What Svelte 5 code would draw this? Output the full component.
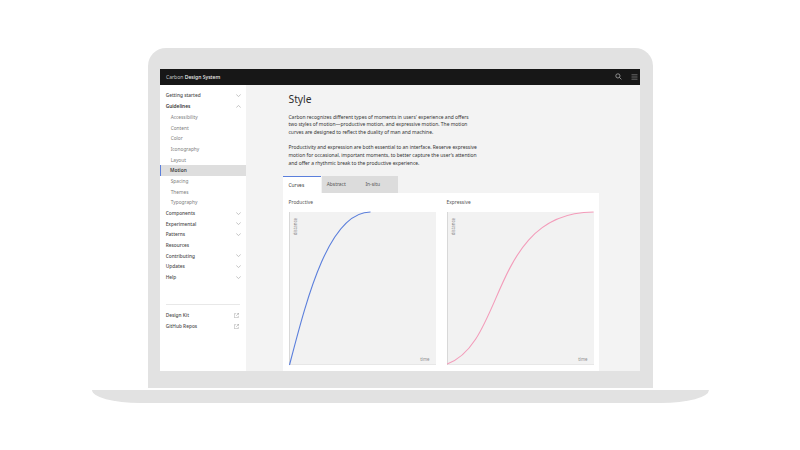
<script>
    const nav = [
        { label: "Getting started", caret: "down" },
        { label: "Guidelines", caret: "up", open: true },
        { label: "Accessibility", sub: true },
        { label: "Content", sub: true },
        { label: "Color", sub: true },
        { label: "Iconography", sub: true },
        { label: "Layout", sub: true },
        { label: "Motion", sub: true, active: true },
        { label: "Spacing", sub: true },
        { label: "Themes", sub: true },
        { label: "Typography", sub: true },
        { label: "Components", caret: "down" },
        { label: "Experimental", caret: "down" },
        { label: "Patterns", caret: "down" },
        { label: "Resources" },
        { label: "Contributing", caret: "down" },
        { label: "Updates", caret: "down" },
        { label: "Help", caret: "down" }
    ];
    const links = ["Design Kit", "GitHub Repos"];
    const tabs = ["Curves", "Abstract", "In-situ"];
    const charts = [
        { title: "Productive", color: "#5b7fdc", d: "M0.5 153C17.5 88 39.5 0 81.5 0" },
        { title: "Expressive", color: "#f39cba", d: "M0.2 152C58.6 131 44.2 0 146.6 0" }
    ];
</script>

<div class="page">
    <div class="laptop">
        <div class="screen">
            <header>
                <span class="brand">Carbon <b>Design System</b></span>
                <span class="actions">
                    <svg width="7" height="7" viewBox="0 0 7 7" fill="none" stroke="#a8a8a8" stroke-width="0.8">
                        <circle cx="2.9" cy="2.9" r="2.1" />
                        <path d="M4.4 4.4L6.4 6.4" />
                    </svg>
                    <svg width="7" height="6" viewBox="0 0 7 6" fill="none" stroke="#a0a0a0" stroke-width="0.6">
                        <path d="M0.5 0.8H6.5M0.5 3H6.5M0.5 5.2H6.5" />
                    </svg>
                </span>
            </header>
            <div class="body">
                <aside>
                    <ul>
                        {#each nav as item}
                            <li class:sub={item.sub} class:active={item.active} class:open={item.open}>
                                <span>{item.label}</span>
                                {#if item.caret}
                                    <svg class="caret" width="5" height="3" viewBox="0 0 5 3" fill="none" stroke="#8d8d8d" stroke-width="0.5">
                                        <path d={item.caret == "down" ? "M0.3 0.5L2.5 2.5L4.7 0.5" : "M0.3 2.5L2.5 0.5L4.7 2.5"} />
                                    </svg>
                                {/if}
                            </li>
                        {/each}
                    </ul>
                    <ul class="links">
                        {#each links as link}
                            <li>
                                <span>{link}</span>
                                <svg width="5" height="5" viewBox="0 0 5 5" fill="none" stroke="#8d8d8d" stroke-width="0.45">
                                    <path d="M2 0.7H0.3V4.7H4.3V3M2.8 0.3H4.7V2.2M4.7 0.3L2.2 2.8" />
                                </svg>
                            </li>
                        {/each}
                    </ul>
                </aside>
                <main>
                    <h1>Style</h1>
                    <p>Carbon recognizes different types of moments in users' experience and offers<br />two styles of motion—productive motion, and expressive motion. The motion<br />curves are designed to reflect the duality of man and machine.</p>
                    <p>Productivity and expression are both essential to an interface. Reserve expressive<br />motion for occasional, important moments, to better capture the user's attention<br />and offer a rhythmic break to the productive experience.</p>
                    <div class="tabs">
                        {#each tabs as tab, i}
                            <span class="tab" class:selected={i == 0}>{tab}</span>
                        {/each}
                    </div>
                    <div class="panel">
                        {#each charts as chart}
                            <div class="col">
                                <div class="title">{chart.title}</div>
                                <div class="chart">
                                    <svg width="147" height="153" viewBox="0 0 147 153" fill="none">
                                        <path d={chart.d} stroke={chart.color} stroke-width="1.1" />
                                    </svg>
                                    <span class="axis-y">distance</span>
                                    <span class="axis-x">time</span>
                                </div>
                            </div>
                        {/each}
                    </div>
                </main>
            </div>
        </div>
    </div>
    <div class="base"></div>
</div>

<style>
    :global(body) {
        margin: 0;
        background: #fff;
    }

    .page {
        box-sizing: border-box;
        width: 800px;
        height: 450px;
        padding: 48px 0 0 1px;
        display: flex;
        flex-direction: column;
        align-items: center;
        overflow: hidden;
        font-family: "Noto Sans", "Open Sans", sans-serif;
        color: #3d3d3d;
    }

    .laptop {
        box-sizing: border-box;
        width: 505px;
        height: 340px;
        padding: 21px 13px 17px 12px;
        background: #e2e2e2;
        border-radius: 18px 18px 0 0;
    }

    .base {
        width: 617px;
        height: 13px;
        margin-top: 2px;
        background: #e2e2e2;
        border-radius: 0 0 48px 48px / 0 0 13px 13px;
    }

    .screen {
        height: 302px;
        display: flex;
        flex-direction: column;
    }

    header {
        height: 15.5px;
        flex: none;
        display: flex;
        align-items: center;
        justify-content: space-between;
        padding: 0 2.5px 0 6px;
        background: #171717;
        color: #c8c8c8;
        font-size: 5.05px;
    }

    header b {
        font-weight: 500;
        color: #f0f0f0;
    }

    .actions {
        display: flex;
        align-items: center;
        gap: 8.5px;
    }

    .body {
        flex: 1;
        display: flex;
        min-height: 0;
    }

    aside {
        width: 86px;
        flex: none;
        box-sizing: border-box;
        padding-top: 5.6px;
        background: #fff;
        display: flex;
        flex-direction: column;
    }

    ul {
        list-style: none;
        margin: 0;
        padding: 0;
    }

    li {
        height: 10.7px;
        box-sizing: border-box;
        display: flex;
        align-items: center;
        justify-content: space-between;
        padding: 0 5.5px 0 5.7px;
        font-size: 4.8px;
        font-weight: 500;
        color: #4a4a4a;
    }

    li.open {
        font-weight: 600;
        color: #333;
    }

    li.sub {
        padding-left: 10.7px;
        font-weight: 400;
        color: #7d7d7d;
    }

    li.active {
        background: #dedede;
        border-left: 1.7px solid #5b7fdc;
        padding-left: 9px;
        font-weight: 600;
        color: #3d3d3d;
    }

    .links {
        margin: 21.5px 6px 0 5.7px;
        padding-top: 5px;
        border-top: 0.7px solid #e8e8e8;
    }

    .links li {
        padding: 0 0.6px 0 0;
    }

    main {
        flex: 1;
        min-width: 0;
        box-sizing: border-box;
        padding: 0 41.5px 0 37px;
        background: #f3f3f3;
    }

    h1 {
        margin: 7.5px 0 0 5.5px;
        font-size: 10.3px;
        line-height: 14px;
        font-weight: 400;
        color: #2e2e2e;
    }

    p {
        margin: 7.5px 0 0 5.5px;
        font-size: 4.95px;
        line-height: 7.9px;
        color: #333;
    }

    p + p {
        margin-top: 7px;
    }

    .tabs {
        display: flex;
        gap: 0.7px;
        margin-top: 8.5px;
    }

    .tab {
        width: 38px;
        height: 16.5px;
        box-sizing: border-box;
        padding: 0 0 1px 5px;
        display: flex;
        align-items: center;
        font-size: 4.9px;
        background: #dcdcdc;
        color: #555;
    }

    .tab.selected {
        padding-left: 5.5px;
        background: #fff;
        border-top: 1.5px solid #5b7fdc;
        color: #3d3d3d;
    }

    .panel {
        display: flex;
        gap: 11px;
        height: 178px;
        padding: 0 4.5px 0 5.5px;
        background: #fff;
    }

    .title {
        height: 19px;
        line-height: 19px;
        font-size: 4.9px;
        color: #555;
    }

    .chart {
        position: relative;
        width: 147px;
        height: 153px;
        background: #f2f2f2;
        border-left: 1px solid #d8d8d8;
        box-shadow: inset 0 -0.5px 0 #dcdcdc;
        box-sizing: border-box;
    }

    .chart svg {
        display: block;
        overflow: visible;
        margin-left: -0.5px;
    }

    .axis-y {
        position: absolute;
        top: 6.5px;
        left: 2px;
        writing-mode: vertical-rl;
        transform: rotate(180deg);
        font-size: 4.4px;
        color: #8d8d8d;
    }

    .axis-x {
        position: absolute;
        right: 6px;
        bottom: 2.5px;
        font-size: 4.4px;
        color: #8d8d8d;
    }
</style>
